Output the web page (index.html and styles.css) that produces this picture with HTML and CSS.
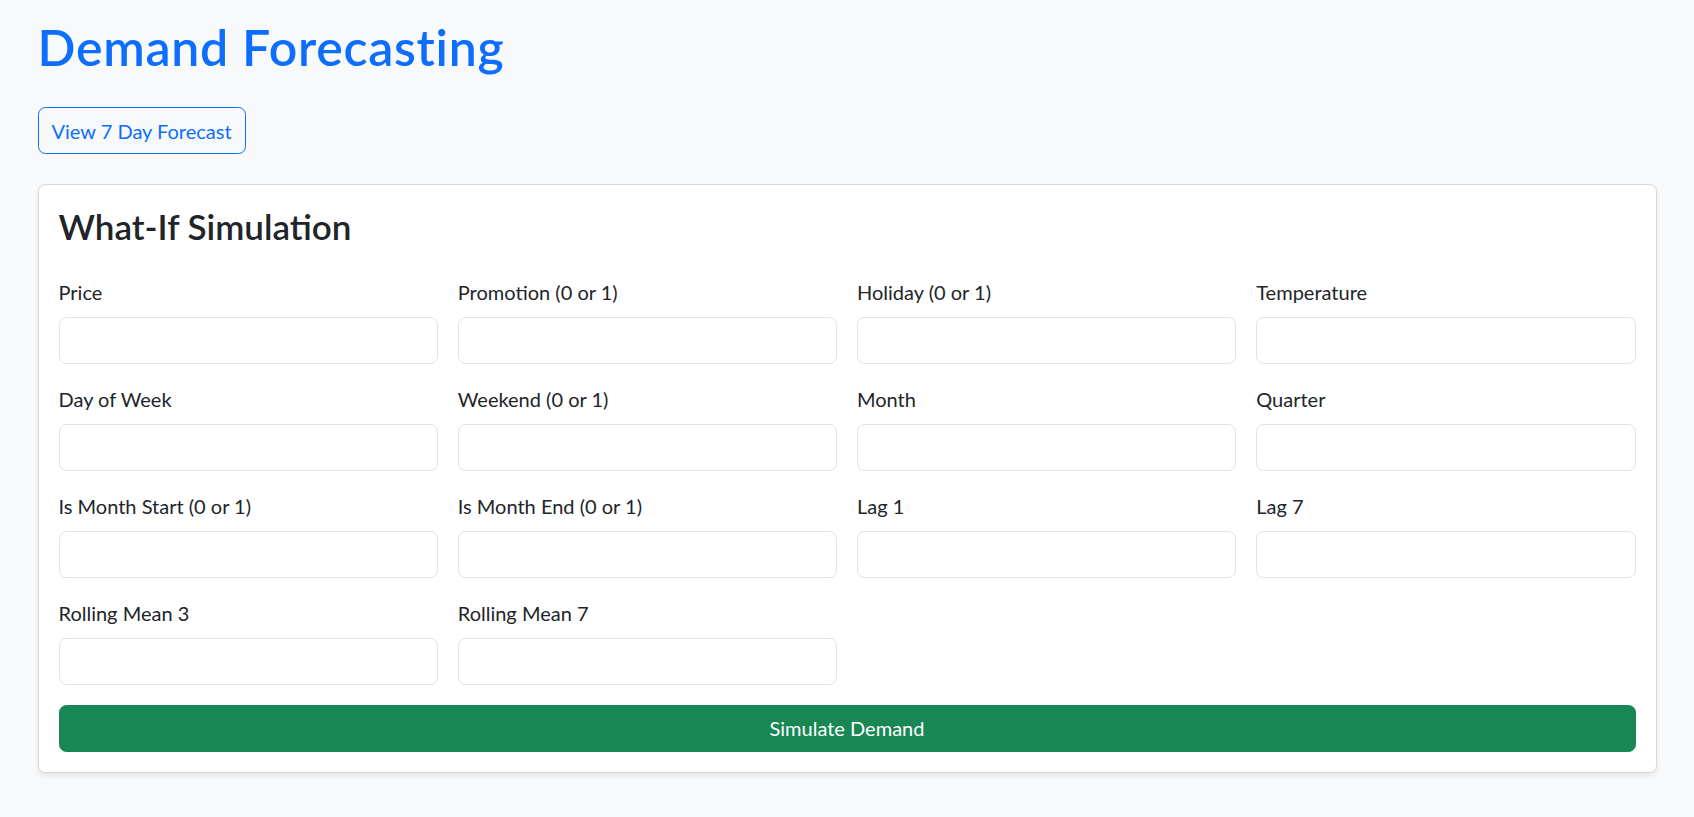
FILE: index.html
```html
<!DOCTYPE html>
<html lang="en">
<head>
<meta charset="utf-8">
<title>Demand Forecasting</title>
<link rel="stylesheet" href="styles.css">
</head>
<body>
<main class="page">
  <h1 class="title">Demand Forecasting</h1>
  <div class="actions">
    <button class="btn-outline" type="button">View 7 Day Forecast</button>
  </div>
  <section class="card">
    <h3 class="card-title">What-If Simulation</h3>
    <form class="form-grid">
      <div class="field"><label class="field-label">Price</label><input class="field-input" type="text"></div>
      <div class="field"><label class="field-label">Promotion (0 or 1)</label><input class="field-input" type="text"></div>
      <div class="field"><label class="field-label">Holiday (0 or 1)</label><input class="field-input" type="text"></div>
      <div class="field"><label class="field-label">Temperature</label><input class="field-input" type="text"></div>
      <div class="field"><label class="field-label">Day of Week</label><input class="field-input" type="text"></div>
      <div class="field"><label class="field-label">Weekend (0 or 1)</label><input class="field-input" type="text"></div>
      <div class="field"><label class="field-label">Month</label><input class="field-input" type="text"></div>
      <div class="field"><label class="field-label">Quarter</label><input class="field-input" type="text"></div>
      <div class="field"><label class="field-label">Is Month Start (0 or 1)</label><input class="field-input" type="text"></div>
      <div class="field"><label class="field-label">Is Month End (0 or 1)</label><input class="field-input" type="text"></div>
      <div class="field"><label class="field-label">Lag 1</label><input class="field-input" type="text"></div>
      <div class="field"><label class="field-label">Lag 7</label><input class="field-input" type="text"></div>
      <div class="field"><label class="field-label">Rolling Mean 3</label><input class="field-input" type="text"></div>
      <div class="field"><label class="field-label">Rolling Mean 7</label><input class="field-input" type="text"></div>
      <button class="btn-success" type="button">Simulate Demand</button>
    </form>
  </section>
</main>
</body>
</html>
```
FILE: styles.css
```css
* { box-sizing: border-box; }

html, body {
  margin: 0;
  padding: 0;
  background: #f8f9fa;
}

body {
  font-family: Lato, "Open Sans", "Noto Sans", sans-serif;
  font-size: 20px;
  line-height: 30px;
  color: #212529;
}

.page {
  padding: 17px 37.5px 40px;
}

.title {
  margin: 0 0 30px;
  font-size: 50px;
  line-height: 60px;
  font-weight: 600;
  letter-spacing: 0.7px;
  color: #0d6efd;
}

.actions {
  display: flex;
  margin-bottom: 30px;
}

.btn-outline {
  height: 47px;
  padding: 0 13px;
  border: 1px solid #0d6efd;
  border-radius: 7.5px;
  background: transparent;
  color: #0d6efd;
  font: inherit;
  line-height: 30px;
}

.card {
  background: #fff;
  border: 1px solid #d6d7d8;
  border-radius: 7.5px;
  box-shadow: 0 2.5px 5px rgba(0, 0, 0, 0.075);
  padding: 20px;
}

.card-title {
  margin: 0 0 29.5px;
  font-size: 35px;
  line-height: 42px;
  font-weight: 600;
  color: #212529;
}

.form-grid {
  display: grid;
  grid-template-columns: repeat(4, 1fr);
  gap: 20px;
}

.field {
  display: flex;
  flex-direction: column;
}

.field-label {
  margin-bottom: 10px;
  line-height: 30px;
}

.field-input {
  height: 47px;
  padding: 7.5px 15px;
  border: 1px solid #dee2e6;
  border-radius: 7.5px;
  background: #fff;
  font: inherit;
  color: #212529;
}

.btn-success {
  grid-column: 1 / -1;
  height: 47px;
  border: 1px solid #198754;
  border-radius: 7.5px;
  background: #198754;
  color: #fff;
  font: inherit;
  line-height: 30px;
}
```
